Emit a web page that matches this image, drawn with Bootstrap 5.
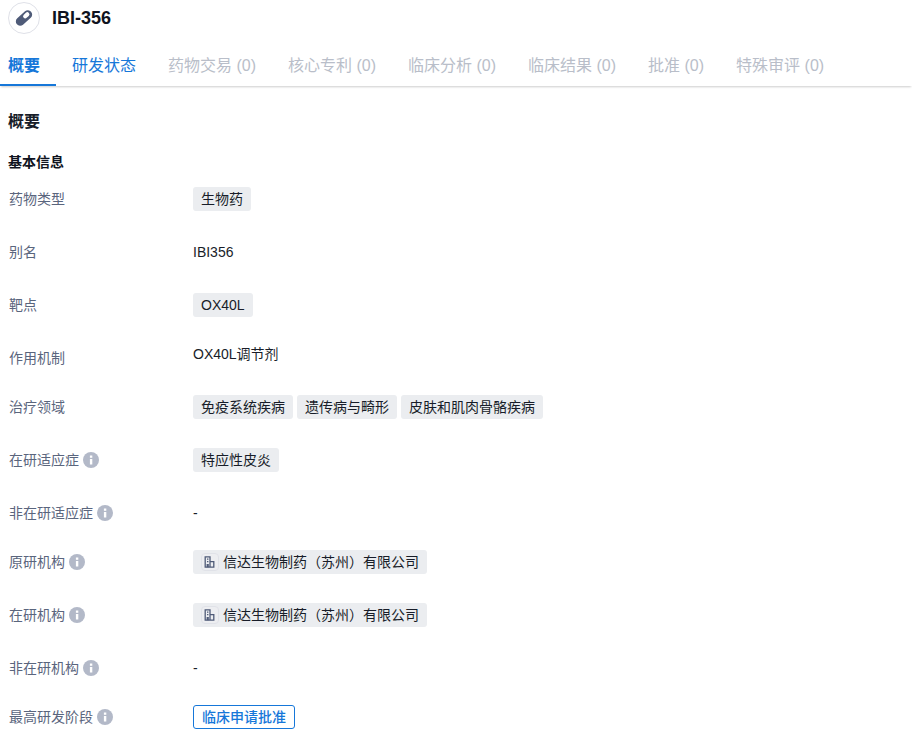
<!DOCTYPE html>
<html lang="zh"><head><meta charset="utf-8">
<link href="https://cdn.jsdelivr.net/npm/bootstrap@5.3.0/dist/css/bootstrap.min.css" rel="stylesheet">
<style>
html,body{height:750px;overflow:hidden}
body{font-family:"Liberation Sans","Noto Sans CJK SC",sans-serif;font-size:14px;color:#181d29;background:#fff}
.head-bar{height:36px;padding-left:8px;gap:12px}
.drug-ico{width:32px;height:32px;border:1px solid #dfe1e8;border-radius:50%}
.drug-name{font-size:18px;font-weight:700;color:#0f1320}
.tab-bar{height:50px;box-shadow:0 2px 2px -1px rgba(0,0,0,.2)}
.tab-item{padding:18px 16px 0;font-size:16px;line-height:24px;height:50px;color:#b9bec9;position:relative;white-space:nowrap}
.tab-item:first-child{padding-left:8px}
.tab-item.on{color:#1677d9;font-weight:700}
.tab-item.on::after{content:"";position:absolute;left:0;right:0;bottom:0;height:2px;background:#1677d9}
.tab-item.ok{color:#1677d9}
.sec-title{font-size:16px;font-weight:700;line-height:24px;margin:24px 0 0 8px;color:#181d29}
.sub-title{font-size:14px;font-weight:700;line-height:20px;margin:18px 0 0 8px;color:#0f1320}
.info-list{margin:15px 0 0 8px}
.info-row{display:flex;min-height:24px;margin-bottom:29px;align-items:center}
.info-row.tight{margin-bottom:25px}
.info-key{width:185px;color:#5a657d;flex:none;gap:4px;display:flex;align-items:center;padding-left:1px}
.info-val{display:flex;gap:4px;color:#181d29;line-height:20px}
.info-val.up{position:relative;top:-4px}
.pill{background:#ebedf0;border-radius:3px;height:24px;line-height:24px;padding:0 8px;white-space:nowrap}
.pill.org{display:flex;align-items:center;gap:4px}
.pill-blue{border:1px solid #1677d9;border-radius:3px;color:#1677d9;height:24px;line-height:22px;padding:0 8px;font-weight:500}
.tip{width:16px;height:16px;flex:none}
.org-ico{width:18px;height:18px;flex:none}
</style></head><body>
<svg width="0" height="0" class="position-absolute"><defs>
<symbol id="i-tip" viewBox="0 0 16 16"><circle cx="8" cy="8" r="8" fill="#b3b9c8"/><rect x="6.9" y="7" width="2.4" height="5.5" fill="#fff"/><rect x="6.9" y="3.5" width="2.4" height="2.3" fill="#fff"/></symbol>
<symbol id="i-org" viewBox="0 0 18 18"><rect x=".5" y=".5" width="17" height="17" rx="3.5" fill="#edeef1" stroke="#e0e2e8"/><path d="M4.2 14.2V3.8H9V14.2ZM9 8.6H12.8V14.2H9M6 6.2H7.4M6 8.6H7.4" fill="none" stroke="#4f5b78" stroke-width="1.3"/><rect x="5.6" y="11" width="2.2" height="3.2" fill="#4f5b78"/></symbol>
</defs></svg>
<div class="d-flex align-items-center head-bar">
<div class="drug-ico d-flex align-items-center justify-content-center"><svg width="20" height="20" viewBox="0 0 20 20"><g transform="rotate(-42 10 10)"><rect x=".5" y="5.7" width="19" height="8.6" rx="4.3" fill="#4f5b78"/><rect x="10" y="7.4" width="7" height="4.2" rx="2.1" fill="#fff"/></g></svg></div>
<div class="drug-name">IBI-356</div>
</div>
<div class="d-flex tab-bar">
<div class="tab-item on">概要</div><div class="tab-item ok">研发状态</div><div class="tab-item">药物交易 (0)</div><div class="tab-item">核心专利 (0)</div><div class="tab-item">临床分析 (0)</div><div class="tab-item">临床结果 (0)</div><div class="tab-item">批准 (0)</div><div class="tab-item">特殊审评 (0)</div>
</div>
<div class="sec-title">概要</div>
<div class="sub-title">基本信息</div>
<div class="info-list">
<div class="info-row"><div class="info-key">药物类型</div><div class="info-val"><span class="pill">生物药</span></div></div>
<div class="info-row"><div class="info-key">别名</div><div class="info-val">IBI356</div></div>
<div class="info-row"><div class="info-key">靶点</div><div class="info-val"><span class="pill">OX40L</span></div></div>
<div class="info-row tight"><div class="info-key">作用机制</div><div class="info-val up">OX40L调节剂</div></div>
<div class="info-row"><div class="info-key">治疗领域</div><div class="info-val"><span class="pill">免疫系统疾病</span><span class="pill">遗传病与畸形</span><span class="pill">皮肤和肌肉骨骼疾病</span></div></div>
<div class="info-row"><div class="info-key">在研适应症<svg class="tip"><use href="#i-tip"/></svg></div><div class="info-val"><span class="pill">特应性皮炎</span></div></div>
<div class="info-row tight"><div class="info-key">非在研适应症<svg class="tip"><use href="#i-tip"/></svg></div><div class="info-val">-</div></div>
<div class="info-row"><div class="info-key">原研机构<svg class="tip"><use href="#i-tip"/></svg></div><div class="info-val"><span class="pill org"><svg class="org-ico"><use href="#i-org"/></svg>信达生物制药（苏州）有限公司</span></div></div>
<div class="info-row"><div class="info-key">在研机构<svg class="tip"><use href="#i-tip"/></svg></div><div class="info-val"><span class="pill org"><svg class="org-ico"><use href="#i-org"/></svg>信达生物制药（苏州）有限公司</span></div></div>
<div class="info-row tight"><div class="info-key">非在研机构<svg class="tip"><use href="#i-tip"/></svg></div><div class="info-val">-</div></div>
<div class="info-row"><div class="info-key">最高研发阶段<svg class="tip"><use href="#i-tip"/></svg></div><div class="info-val"><span class="pill-blue">临床申请批准</span></div></div>
</div>
<script src="https://cdn.jsdelivr.net/npm/bootstrap@5.3.0/dist/js/bootstrap.bundle.min.js"></script>
</body></html>
